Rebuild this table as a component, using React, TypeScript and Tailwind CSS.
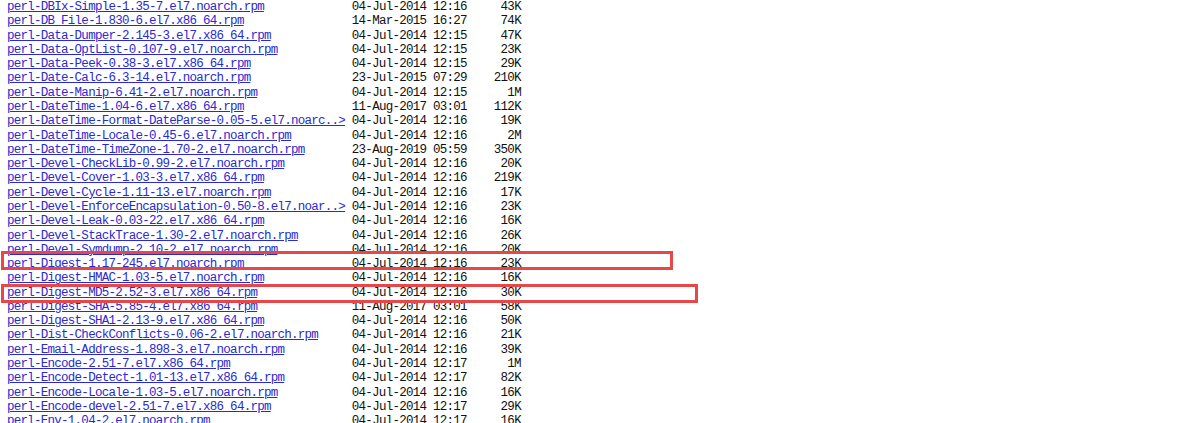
import React from "react";

const rows: [string, string, string][] = [
  ["perl-DBIx-Simple-1.35-7.el7.noarch.rpm", "04-Jul-2014 12:16", "43K"],
  ["perl-DB_File-1.830-6.el7.x86_64.rpm", "14-Mar-2015 16:27", "74K"],
  ["perl-Data-Dumper-2.145-3.el7.x86_64.rpm", "04-Jul-2014 12:15", "47K"],
  ["perl-Data-OptList-0.107-9.el7.noarch.rpm", "04-Jul-2014 12:15", "23K"],
  ["perl-Data-Peek-0.38-3.el7.x86_64.rpm", "04-Jul-2014 12:15", "29K"],
  ["perl-Date-Calc-6.3-14.el7.noarch.rpm", "23-Jul-2015 07:29", "210K"],
  ["perl-Date-Manip-6.41-2.el7.noarch.rpm", "04-Jul-2014 12:15", "1M"],
  ["perl-DateTime-1.04-6.el7.x86_64.rpm", "11-Aug-2017 03:01", "112K"],
  ["perl-DateTime-Format-DateParse-0.05-5.el7.noarc..>", "04-Jul-2014 12:16", "19K"],
  ["perl-DateTime-Locale-0.45-6.el7.noarch.rpm", "04-Jul-2014 12:16", "2M"],
  ["perl-DateTime-TimeZone-1.70-2.el7.noarch.rpm", "23-Aug-2019 05:59", "350K"],
  ["perl-Devel-CheckLib-0.99-2.el7.noarch.rpm", "04-Jul-2014 12:16", "20K"],
  ["perl-Devel-Cover-1.03-3.el7.x86_64.rpm", "04-Jul-2014 12:16", "219K"],
  ["perl-Devel-Cycle-1.11-13.el7.noarch.rpm", "04-Jul-2014 12:16", "17K"],
  ["perl-Devel-EnforceEncapsulation-0.50-8.el7.noar..>", "04-Jul-2014 12:16", "23K"],
  ["perl-Devel-Leak-0.03-22.el7.x86_64.rpm", "04-Jul-2014 12:16", "16K"],
  ["perl-Devel-StackTrace-1.30-2.el7.noarch.rpm", "04-Jul-2014 12:16", "26K"],
  ["perl-Devel-Symdump-2.10-2.el7.noarch.rpm", "04-Jul-2014 12:16", "20K"],
  ["perl-Digest-1.17-245.el7.noarch.rpm", "04-Jul-2014 12:16", "23K"],
  ["perl-Digest-HMAC-1.03-5.el7.noarch.rpm", "04-Jul-2014 12:16", "16K"],
  ["perl-Digest-MD5-2.52-3.el7.x86_64.rpm", "04-Jul-2014 12:16", "30K"],
  ["perl-Digest-SHA-5.85-4.el7.x86_64.rpm", "11-Aug-2017 03:01", "58K"],
  ["perl-Digest-SHA1-2.13-9.el7.x86_64.rpm", "04-Jul-2014 12:16", "50K"],
  ["perl-Dist-CheckConflicts-0.06-2.el7.noarch.rpm", "04-Jul-2014 12:16", "21K"],
  ["perl-Email-Address-1.898-3.el7.noarch.rpm", "04-Jul-2014 12:16", "39K"],
  ["perl-Encode-2.51-7.el7.x86_64.rpm", "04-Jul-2014 12:17", "1M"],
  ["perl-Encode-Detect-1.01-13.el7.x86_64.rpm", "04-Jul-2014 12:17", "82K"],
  ["perl-Encode-Locale-1.03-5.el7.noarch.rpm", "04-Jul-2014 12:16", "16K"],
  ["perl-Encode-devel-2.51-7.el7.x86_64.rpm", "04-Jul-2014 12:17", "29K"],
  ["perl-Env-1.04-2.el7.noarch.rpm", "04-Jul-2014 12:17", "16K"],
];

export default function App() {
  return (
    <div className="relative h-[423px] w-[1200px] overflow-hidden bg-white">
      <div
        className="pl-[7px] text-[12.5px] leading-[14.28px] tracking-[-0.74px] text-[#111]"
        style={{ fontFamily: '"Liberation Mono", "DejaVu Sans Mono", monospace' }}
      >
        {rows.map(([name, date, size]) => (
          <div key={name} className="whitespace-pre">
            <a href="#" className="text-[#2a2ad2] underline decoration-[#2a2ad2]">
              {name}
            </a>
            {" ".repeat(51 - name.length)}
            {date}
            {size.padStart(8, " ")}
          </div>
        ))}
      </div>
      <div className="pointer-events-none absolute left-[1px] top-[251px] h-[19px] w-[672px] border-[3px] border-[#e8474a]" />
      <div className="pointer-events-none absolute left-[1px] top-[284px] h-[19px] w-[697px] border-[3px] border-[#e8474a]" />
    </div>
  );
}
